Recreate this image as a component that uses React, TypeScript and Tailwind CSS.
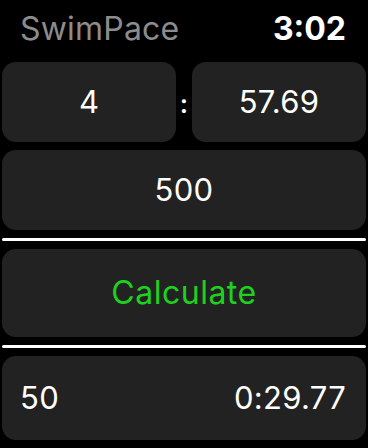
import React from 'react'

const font = { fontFamily: 'Inter, "Liberation Sans", sans-serif' }

function Field({ children, className = '' }: { children: React.ReactNode; className?: string }) {
  return (
    <div className={`flex items-center rounded-[14px] bg-[#222222] ${className}`}>{children}</div>
  )
}

export default function App() {
  return (
    <div className="flex h-[448px] w-[368px] flex-col overflow-hidden bg-black" style={font}>
      {/* Status bar */}
      <header className="flex h-[62px] items-center justify-between pb-[4px] pl-[20px] pr-[22px]">
        <span className="text-[32px] leading-none tracking-[0.2px] text-[#8c8c8c]">SwimPace</span>
        <span className="text-[32px] font-bold leading-none text-white">3:02</span>
      </header>

      <main className="flex flex-col gap-2 px-[2px]">
        {/* Pace inputs */}
        <div className="flex h-[80px] items-center">
          <Field className="h-full w-[174px] justify-center">
            <span className="text-[31px] text-white">4</span>
          </Field>
          <span className="flex w-[16px] justify-center pt-[4px] text-[26px] font-semibold leading-none text-white">:</span>
          <Field className="h-full w-[174px] justify-center">
            <span className="text-[31px] tracking-[0.3px] text-white">57.69</span>
          </Field>
        </div>

        {/* Distance */}
        <Field className="h-[80px] justify-center">
          <span className="text-[31px] tracking-[0.3px] text-white">500</span>
        </Field>

        <div className="h-[3px] rounded-full bg-white" />

        <button className="flex h-[88px] items-center justify-center rounded-[14px] bg-[#222222]">
          <span className="text-[32px] tracking-[0.5px] text-[#1fd11f]">Calculate</span>
        </button>

        <div className="h-[3px] rounded-full bg-white" />

        {/* Result */}
        <Field className="h-[84px] justify-between pl-[18px] pr-[20px]">
          <span className="text-[31px] tracking-[0.3px] text-white">50</span>
          <span className="text-[31px] tracking-[0.3px] text-white">0:29.77</span>
        </Field>
      </main>
    </div>
  )
}
